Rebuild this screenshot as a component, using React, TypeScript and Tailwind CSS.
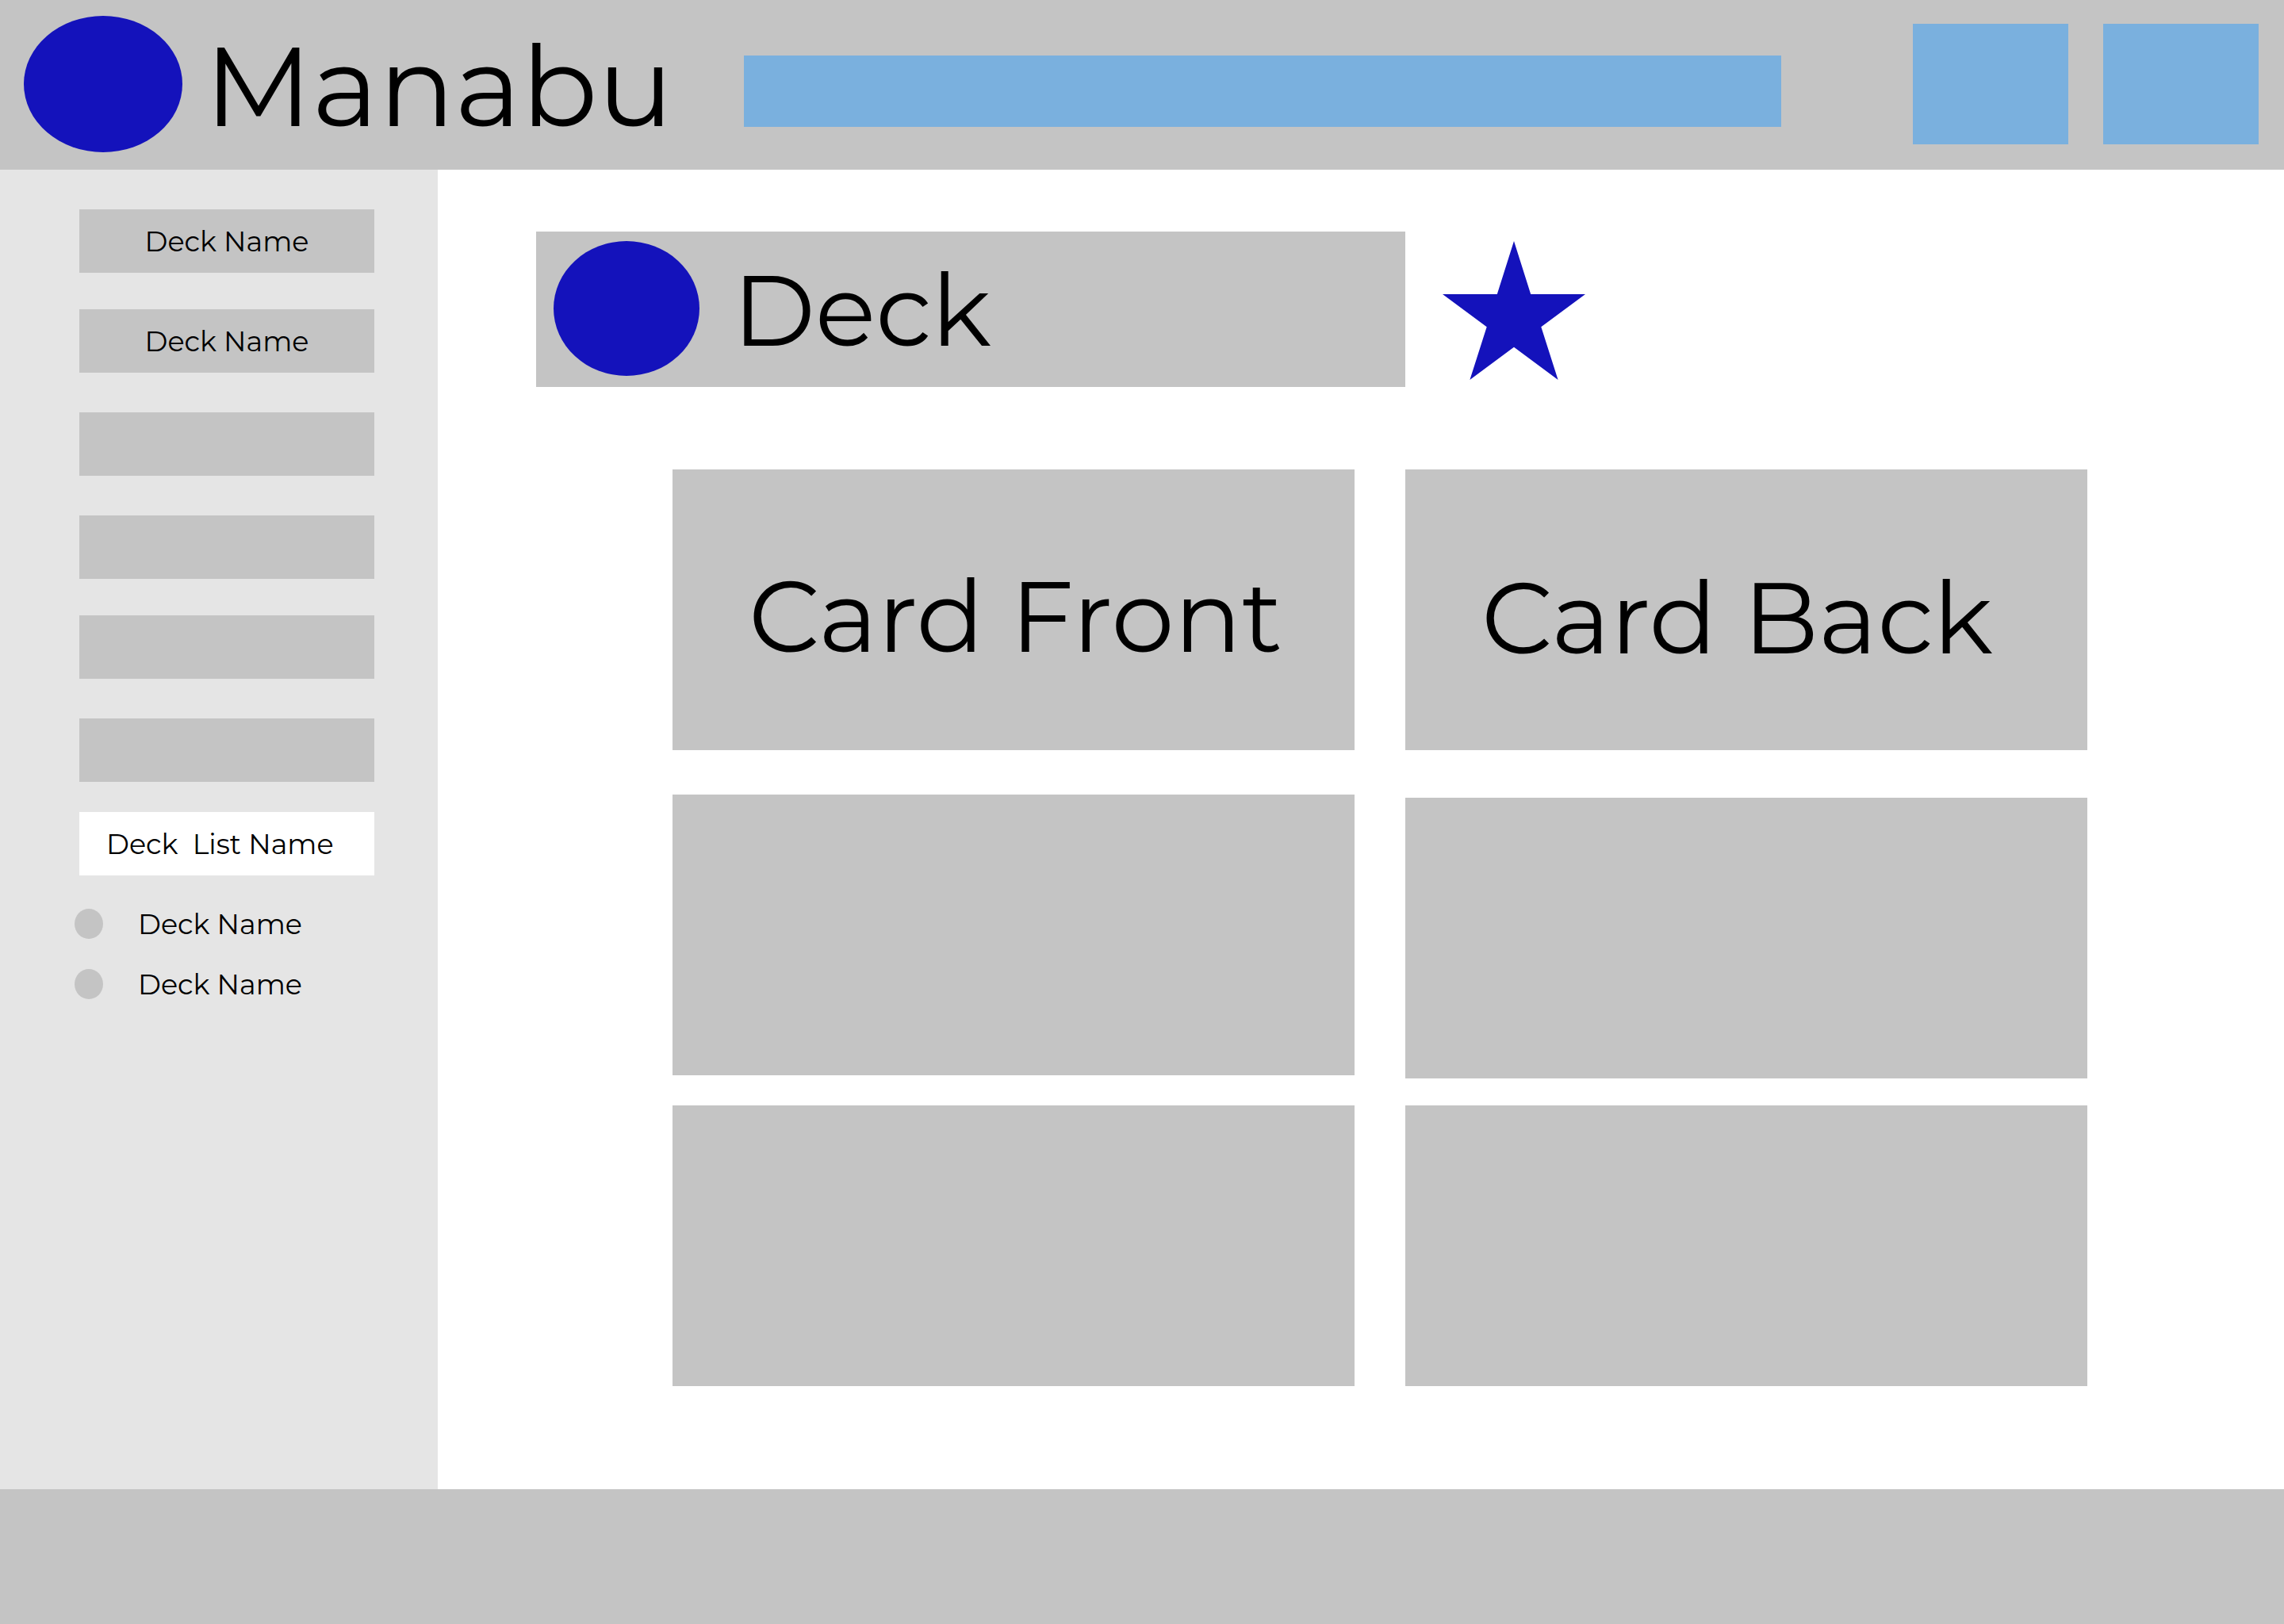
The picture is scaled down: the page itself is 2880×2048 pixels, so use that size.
const decks = [
  { label: "Deck Name", space: "mb-[46px]" },
  { label: "Deck Name", space: "mb-[50px]" },
  { label: "", space: "mb-[50px]" },
  { label: "", space: "mb-[46px]" },
  { label: "", space: "mb-[50px]" },
  { label: "", space: "mb-[38px]" },
];

function Header() {
  return (
    <header className="flex h-[214px] items-center bg-[#c4c4c4] pr-8 pb-0.5 pl-[30px]">
      <div className="h-[172px] w-[200px] shrink-0 rounded-[50%] bg-[#1412bb]" />
      <h1 className="w-[708px] shrink-0 pt-1.5 pl-7 text-[142px] leading-none">Manabu</h1>
      <input
        type="search"
        aria-label="Search decks"
        className="mt-[18px] h-[90px] min-w-0 flex-1 bg-[#7ab0de] px-8 text-4xl outline-none"
      />
      <nav aria-label="Account" className="ml-[166px] flex shrink-0 gap-11">
        <button type="button" aria-label="Settings" className="h-[152px] w-[196px] bg-[#7ab0de]" />
        <button type="button" aria-label="Profile" className="h-[152px] w-[196px] bg-[#7ab0de]" />
      </nav>
    </header>
  );
}

function Sidebar() {
  return (
    <aside className="flex w-[552px] shrink-0 flex-col bg-[#e5e5e5] pt-[50px] pr-20 pl-[100px] text-[35px] leading-none">
      {decks.map((deck, i) => (
        <button
          key={i}
          type="button"
          aria-label={deck.label || `Empty deck ${i + 1}`}
          className={`h-20 bg-[#c4c4c4] ${deck.space}`}
        >
          {deck.label}
        </button>
      ))}
      <button type="button" className="h-20 bg-white pl-[34px] text-left whitespace-pre">
        {"Deck  List Name"}
      </button>
      <ul className="mt-[42px] -ml-1.5 flex flex-col gap-[38px]">
        {["Deck Name", "Deck Name"].map((name, i) => (
          <li key={i} className="flex items-center gap-11">
            <span className="h-[38px] w-9 rounded-[50%] bg-[#c4c4c4]" />
            <a href="#deck">{name}</a>
          </li>
        ))}
      </ul>
    </aside>
  );
}

function Card({ label = "", className = "" }: { label?: string; className?: string }) {
  return (
    <div
      className={`flex h-[354px] items-center bg-[#c4c4c4] pl-24 text-[126px] leading-none whitespace-nowrap ${className}`}
    >
      {label}
    </div>
  );
}

function Main() {
  return (
    <main className="min-w-0 flex-1 bg-white pt-[78px] pb-[130px]">
      <div className="flex items-start pl-[124px]">
        <div className="flex h-[196px] w-full max-w-[1096px] items-center bg-[#c4c4c4] pb-0.5 pl-[22px]">
          <div className="h-[170px] w-[184px] shrink-0 rounded-[50%] bg-[#1412bb]" />
          <h2 className="pt-1 pl-[42px] text-[126px] leading-none">Deck</h2>
        </div>
        <button type="button" aria-label="Favourite deck" className="mt-3 ml-[47px] shrink-0">
          <svg width="180" height="175" viewBox="0 0 180 175" fill="#1412bb" aria-hidden="true">
            <path d="M90 0 111.2 67H180L124.3 108.3 145.6 175 90 133.8 34.4 175 55.7 108.3 0 67H68.8Z" />
          </svg>
        </button>
      </div>
      <div className="mt-[104px] flex gap-16 pr-[248px] pl-[296px]">
        <div className="min-w-0 flex-1">
          <Card label="Card Front" className="pt-4" />
          <Card className="mt-14" />
          <Card className="mt-[38px]" />
        </div>
        <div className="min-w-0 flex-1">
          <Card label="Card Back" className="pt-5" />
          <Card className="mt-[60px]" />
          <Card className="mt-[34px]" />
        </div>
      </div>
    </main>
  );
}

export default function App() {
  return (
    <div className="flex min-h-screen flex-col font-[Montserrat,Inter,sans-serif] font-normal text-black">
      <Header />
      <div className="flex flex-1">
        <Sidebar />
        <Main />
      </div>
      <footer className="h-[170px] bg-[#c4c4c4]" />
    </div>
  );
}
